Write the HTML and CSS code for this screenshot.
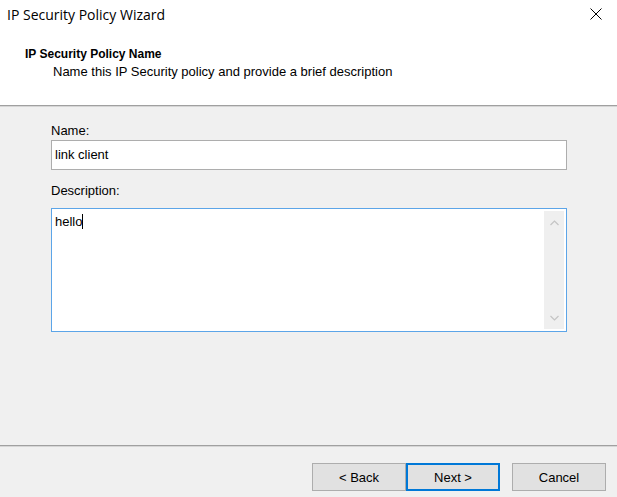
FILE: index.html
```html
<!DOCTYPE html>
<html>
<head>
<meta charset="utf-8">
<link rel="stylesheet" href="styles.css">
</head>
<body>
<div class="window">
  <div class="titlebar">
    <span class="title">IP Security Policy Wizard</span>
    <span class="close">
      <svg width="12" height="12" viewBox="0 0 12 12"><path d="M0.5 0.5 L11.5 11.5 M11.5 0.5 L0.5 11.5" stroke="#000" stroke-width="1" fill="none"/></svg>
    </span>
  </div>
  <div class="header">
    <div class="h-title">IP Security Policy Name</div>
    <div class="h-sub">Name this IP Security policy and provide a brief description</div>
  </div>
  <div class="content">
    <label class="lbl">Name:</label>
    <div class="input">link client</div>
    <label class="lbl lbl-desc">Description:</label>
    <div class="textarea">
      <div class="ta-text">hello<span class="caret"></span></div>
      <div class="scroll">
        <svg width="9" height="6" viewBox="0 0 9 6"><path d="M0.5 5 L4.5 1 L8.5 5" stroke="#c4c4c4" stroke-width="1.2" fill="none"/></svg>
        <svg width="9" height="6" viewBox="0 0 9 6"><path d="M0.5 1 L4.5 5 L8.5 1" stroke="#c4c4c4" stroke-width="1.2" fill="none"/></svg>
      </div>
    </div>
  </div>
  <div class="footer">
    <div class="btn">&lt; Back</div>
    <div class="btn btn-default">Next &gt;</div>
    <div class="btn btn-cancel">Cancel</div>
  </div>
</div>
</body>
</html>
```
FILE: styles.css
```css
html, body {
  margin: 0;
  padding: 0;
}
body {
  width: 617px;
  height: 497px;
  background: #f0f0f0;
  font-family: "Liberation Sans", Arial, sans-serif;
  font-size: 13px;
  color: #000;
  overflow: hidden;
}
.window {
  display: flex;
  flex-direction: column;
  height: 497px;
}
.titlebar {
  height: 30px;
  background: #fff;
  display: flex;
  align-items: center;
  justify-content: space-between;
  padding: 0 15px 0 7px;
}
.title {
  font-family: "Open Sans", "Noto Sans", sans-serif;
  font-size: 14px;
  color: #000;
  position: relative;
  top: -1px;
}
.close {
  display: flex;
  width: 12px;
  height: 12px;
  position: relative;
  top: -1px;
}
.header {
  background: #fff;
  height: 76px;
  box-sizing: border-box;
  padding: 16px 0 0 25px;
  border-bottom: 1px solid #a0a0a0;
  box-shadow: 0 1px 0 #d6d6d6;
}
.h-title {
  font-weight: bold;
  font-size: 12px;
  line-height: 16px;
}
.h-sub {
  padding-left: 28px;
  line-height: 15px;
  margin-top: 2px;
}
.content {
  flex: 1;
  display: flex;
  flex-direction: column;
  padding: 17px 50px 0 51px;
  border-bottom: 1px solid #a0a0a0;
  box-shadow: 0 1px 0 #d6d6d6;
}
.lbl {
  display: block;
  line-height: 16px;
  margin-bottom: 1px;
}
.lbl-desc {
  margin-top: 13px;
  margin-bottom: 9px;
}
.input {
  height: 30px;
  box-sizing: border-box;
  border: 1px solid #adadad;
  background: #fff;
  padding: 6px 3px;
  line-height: 16px;
}
.textarea {
  height: 124px;
  box-sizing: border-box;
  border: 1px solid #5ca5e8;
  background: #fff;
  display: flex;
  padding: 2px;
}
.ta-text {
  flex: 1;
  line-height: 16px;
  padding: 3px 1px;
}
.caret {
  display: inline-block;
  width: 1px;
  height: 15px;
  background: #000;
  vertical-align: -3px;
}
.scroll {
  width: 20px;
  background: #efefef;
  display: flex;
  flex-direction: column;
  justify-content: space-between;
  align-items: center;
  padding: 9px 0 8px;
}
.scroll svg { display: block; }
.footer {
  height: 51px;
  display: flex;
  align-items: flex-start;
  justify-content: flex-end;
  padding: 17px 11px 0 0;
  box-sizing: border-box;
}
.btn {
  width: 94px;
  height: 28px;
  box-sizing: border-box;
  border: 1px solid #adadad;
  background: #e1e1e1;
  display: flex;
  align-items: center;
  justify-content: center;
}
.btn-default {
  border: 2px solid #0078d7;
}
.btn-cancel {
  margin-left: 12px;
}
```
